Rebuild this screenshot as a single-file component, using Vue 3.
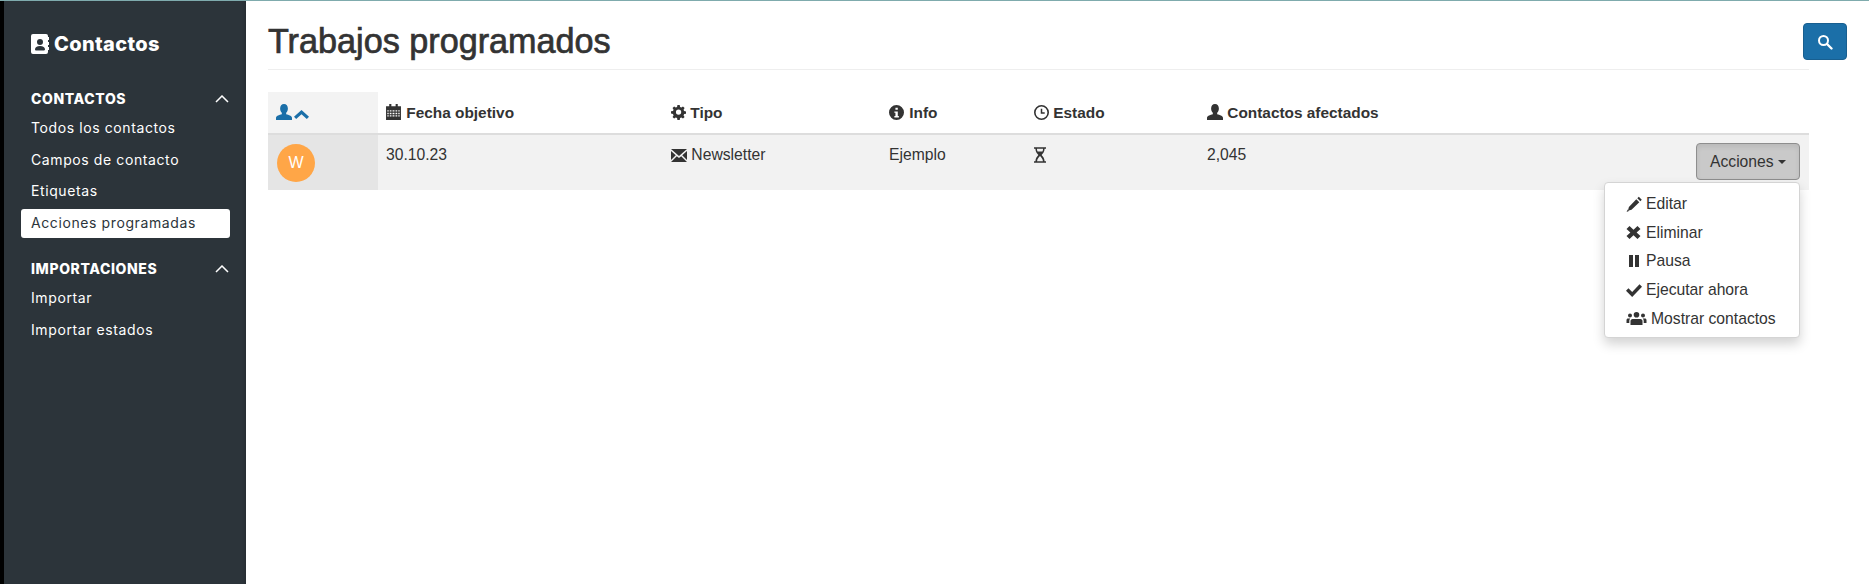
<script setup>
const contactos = ['Todos los contactos', 'Campos de contacto', 'Etiquetas']
const importaciones = ['Importar', 'Importar estados']
</script>

<template>
  <div class="page">
    <aside class="side">
      <div class="brand">
        <svg class="brand-ic" viewBox="0 0 18 20" width="18" height="20">
          <path fill="#fff" fill-rule="evenodd" d="M2 0h13a2 2 0 0 1 2 2v1h1v3h-1v2h1v3h-1v2h1v3h-1v2a2 2 0 0 1-2 2H2a2 2 0 0 1-2-2V2a2 2 0 0 1 2-2zm7 5a3 3 0 1 0 0 6 3 3 0 0 0 0-6zM4 15.500c0 .5.400.900.900.900h8.200c.5 0 .900-.400.900-.900 0-2-1.800-3.500-5-3.500s-5 1.500-5 3.500z"/>
        </svg>
        <span>Contactos</span>
      </div>

      <div class="group first">
        <span>CONTACTOS</span>
        <svg viewBox="0 0 14 8" width="14" height="8"><path d="M1 7l6-6 6 6" fill="none" stroke="#fff" stroke-width="1.500"/></svg>
      </div>
      <a v-for="c in contactos" :key="c" class="nav">{{ c }}</a>
      <a class="nav active">Acciones programadas</a>

      <div class="group second">
        <span>IMPORTACIONES</span>
        <svg viewBox="0 0 14 8" width="14" height="8"><path d="M1 7l6-6 6 6" fill="none" stroke="#fff" stroke-width="1.500"/></svg>
      </div>
      <a v-for="c in importaciones" :key="c" class="nav">{{ c }}</a>
    </aside>

    <main class="main">
      <div class="content">
        <h1 class="title">Trabajos programados</h1>
        <table class="tbl">
          <colgroup>
            <col class="c1" /><col class="c2" /><col class="c3" />
            <col class="c4" /><col class="c5" /><col class="c6" /><col />
          </colgroup>
          <thead>
            <tr>
              <th class="sorted">
                <svg viewBox="1 1 14 14" width="16" height="16"><path fill="#1b6fa8" d="M8 1c2.200 0 3.400 1.700 3.400 3.900 0 1.500-.600 2.900-1.500 3.700v1.300c2.200.6 5.100 1.500 5.100 3.100V15H1v-2c0-1.600 2.900-2.500 5.100-3.100V8.600C5.200 7.800 4.600 6.400 4.600 4.900 4.600 2.700 5.800 1 8 1z"/></svg>
                <svg class="chev" viewBox="0 0 15 10" width="15" height="10"><path fill="#1b6fa8" d="M7.500 0L15 6.800 12.800 9 7.500 4.200 2.200 9 0 6.800z"/></svg>
              </th>
              <th>
                <svg class="gap" viewBox="0 0 14 15" width="15" height="16"><path fill="#333" fill-rule="evenodd" d="M3 0h2v2h4V0h2v2h3v13H0V2h3zM1.200 5.800h1.300v1.300H1.200zm2.300 0h1.600v1.300H3.500zm2.600 0h1.800v1.300H6.100zm2.800 0h1.600v1.300H8.900zm2.600 0h1.300v1.300h-1.300zM1.200 8.100h1.300v1.400H1.200zm2.300 0h1.600v1.400H3.500zm2.600 0h1.800v1.400H6.100zm2.800 0h1.600v1.400H8.900zm2.600 0h1.300v1.400h-1.300zM1.200 10.500h1.300v1.300H1.200zm2.300 0h1.600v1.300H3.500zm2.600 0h1.800v1.300H6.100zm2.800 0h1.600v1.300H8.900zm2.600 0h1.300v1.300h-1.300z"/></svg>
                Fecha objetivo
              </th>
              <th>
                <svg viewBox="0 0 14 14" width="15" height="15"><path fill="#333" fill-rule="evenodd" d="M5.800 0h2.400l.4 2 1.400.6L11.700 1.500l1.700 1.700-1.100 1.700.6 1.400 2.100.4v2.400l-2.100.4-.6 1.400 1.100 1.700-1.700 1.700-1.700-1.100-1.400.6-.4 2.100H5.800l-.4-2.100-1.400-.6-1.700 1.100L.6 12.600l1.100-1.700-.6-1.400L-1 9V6.600l2.100-.4.6-1.400L.6 3.200l1.700-1.700L4 2.600 5.400 2zM7 4.600a2.800 2.800 0 1 0 0 5.600 2.800 2.800 0 0 0 0-5.600z" transform="translate(.9 .1) scale(.88)"/></svg>
                Tipo
              </th>
              <th>
                <svg class="gap" viewBox="0 0 14 14" width="15" height="15"><path fill="#333" fill-rule="evenodd" d="M7 0a7 7 0 1 1 0 14A7 7 0 0 1 7 0zM6 2.500v2h2.200v-2zM5 6v1.300h1v3H5v1.300h4.200v-1.300h-1V6z"/></svg>
                Info
              </th>
              <th>
                <svg viewBox="0 0 14 14" width="15" height="15"><path fill="#333" fill-rule="evenodd" d="M7 0a7 7 0 1 1 0 14A7 7 0 0 1 7 0zm0 1.500a5.500 5.500 0 1 0 0 11 5.500 5.500 0 0 0 0-11zM6.300 3.500h1.400v3.300H10v1.400H6.300z"/></svg>
                Estado
              </th>
              <th>
                <svg viewBox="1 1 14 14" width="16" height="16"><path fill="#333" d="M8 1c2.200 0 3.400 1.700 3.400 3.900 0 1.500-.600 2.900-1.500 3.700v1.300c2.200.6 5.100 1.500 5.100 3.100V15H1v-2c0-1.600 2.900-2.500 5.100-3.100V8.600C5.200 7.800 4.600 6.400 4.600 4.900 4.600 2.700 5.800 1 8 1z"/></svg>
                Contactos afectados
              </th>
              <th></th>
            </tr>
          </thead>
          <tbody>
            <tr>
              <td class="avatar-cell"><div class="avatar">W</div></td>
              <td>30.10.23</td>
              <td>
                <svg viewBox="0 0 16 13" width="16" height="13"><path fill="#333" d="M0 0h16L8 7zM0 2l4.800 4.200L0 11zM16 2v9l-4.800-4.800zM5.800 7.200L8 9.100l2.200-1.900L16 13H0z"/></svg>
                Newsletter
              </td>
              <td>Ejemplo</td>
              <td>
                <svg class="sand" viewBox="0 0 11 14" width="12" height="16"><path fill="#333" fill-rule="evenodd" d="M0 0h11v1.300H9.700c0 2.700-1.500 4.400-2.700 5.700 1.200 1.300 2.700 3 2.700 5.700H11V14H0v-1.300h1.300C1.300 10 2.800 8.300 4 7 2.800 5.700 1.300 4 1.300 1.300H0zM2.700 1.300c0 1 .200 1.800.600 2.500h4.400c.4-.7.600-1.500.600-2.500zM5.500 7.900C4.400 9.100 3 10.500 2.800 12.700h5.400C8 10.500 6.600 9.100 5.500 7.900z"/></svg>
              </td>
              <td>2,045</td>
              <td class="act-cell">
                <div class="act-wrap">
                  <button class="act-btn">Acciones <i class="caret"></i></button>
                  <ul class="menu">
                    <li>
                      <svg viewBox="0 0 16 17" width="16" height="17"><path fill="#333" d="M12.800 0.800L15.800 3.800 14.300 5.300 11.300 2.300zM10.300 3.200L13.300 6.200 5.500 13.800 1.900 14.800 2.900 11zM1.700 13.600l1.200 1.300-2.300 1.200z"/></svg>
                      <span>Editar</span>
                    </li>
                    <li>
                      <svg viewBox="0 0 16 13" width="16" height="13"><path fill="#333" d="M3.500 0l4 3.800L11.500 0l3 3-3.900 3.500 3.900 3.500-3 3-4-3.800-4 3.800-3-3 3.900-3.500L.5 3z"/></svg>
                      <span>Eliminar</span>
                    </li>
                    <li>
                      <svg viewBox="0 0 16 12" width="16" height="12"><path fill="#333" d="M3 0h4v12H3zM9 0h4v12H9z"/></svg>
                      <span>Pausa</span>
                    </li>
                    <li>
                      <svg viewBox="0 0 15 12" width="16" height="13"><path fill="#333" d="M12.700.2L15 2.500 5.800 12 0 6.300l2.300-2.300 3.500 3.400z"/></svg>
                      <span>Ejecutar ahora</span>
                    </li>
                    <li>
                      <svg viewBox="0 0 20 13" width="21" height="13"><path fill="#333" d="M10 0a2.800 2.800 0 1 1 0 5.600A2.800 2.800 0 0 1 10 0zM3.500 1.500a2 2 0 1 1 0 4 2 2 0 0 1 0-4zm13 0a2 2 0 1 1 0 4 2 2 0 0 1 0-4zM6 7h8c1.200 0 2 1 2 2.200V13H4V9.200C4 8 4.800 7 6 7zM1.500 6.500h2.300c-.6.500-1 1.300-1 2.300v2.200H0V8c0-.8.700-1.500 1.500-1.500zm14.700 0h2.300c.8 0 1.500.7 1.500 1.500v3h-2.800V8.800c0-1-.4-1.800-1-2.300z"/></svg>
                      <span>Mostrar contactos</span>
                    </li>
                  </ul>
                </div>
              </td>
            </tr>
          </tbody>
        </table>
      </div>
      <button class="search">
        <svg viewBox="0 0 16 16" width="16" height="16"><circle cx="6.500" cy="6.500" r="4.500" fill="none" stroke="#fff" stroke-width="2"/><path d="M10 10l4.500 4.500" stroke="#fff" stroke-width="2.400" stroke-linecap="round"/></svg>
      </button>
    </main>
  </div>
</template>

<style>
html, body { margin: 0; background: #fff; }
</style>

<style scoped>
.page {
  display: flex;
  height: 584px;
  overflow: hidden;
  border-top: 1px solid #7fabad;
  box-sizing: border-box;
  font-family: "Liberation Sans", Arial, sans-serif;
  font-size: 15.700px;
  color: #333;
}
.side {
  width: 246px;
  flex: none;
  box-sizing: border-box;
  background: #2c343a;
  border-left: 4px solid #000;
  box-shadow: inset -3px 0 3px -2px rgba(0, 0, 0, .18);
  padding: 31px 16px 0 17px;
  font-family: Inter, "Open Sans", sans-serif;
  color: #fff;
}
.brand {
  display: flex;
  align-items: center;
  gap: 5px;
  padding-left: 10px;
  font-size: 20px;
  font-weight: 800;
  letter-spacing: .35px;
  line-height: 24px;
}
.group {
  display: flex;
  justify-content: space-between;
  align-items: center;
  padding: 0 1px 0 10px;
  font-size: 14px;
  font-weight: 800;
  letter-spacing: .6px;
  line-height: 20px;
}
.group.first { margin-top: 33px; }
.group.second { margin-top: 24px; }
.nav {
  display: block;
  height: 29px;
  margin: 5px 0 -2.400px;
  padding-left: 10px;
  line-height: 27px;
  font-size: 14px;
  letter-spacing: .6px;
  border-radius: 3px;
}
.nav.active {
  background: #fff;
  color: #2c343a;
}
.main {
  flex: 1;
  display: flex;
  padding: 0 22px;
  min-width: 0;
}
.content {
  flex: 1;
  min-width: 0;
}
.title {
  margin: 0 0 22px;
  border-bottom: 1px solid #eee;
  font-size: 34.200px;
  font-weight: 400;
  -webkit-text-stroke: .7px #333;
  line-height: 80px;
  height: 68px;
  color: #333;
}
.tbl {
  width: 100%;
  table-layout: fixed;
  border-collapse: collapse;
}
.c1 { width: 110px; }
.c2 { width: 285px; }
.c3 { width: 218px; }
.c4 { width: 145px; }
.c5 { width: 173px; }
.c6 { width: 300px; }
.tbl th {
  height: 42px;
  box-sizing: border-box;
  padding: 8px;
  text-align: left;
  font-size: 15.400px;
  font-weight: 700;
  border-bottom: 2px solid #ddd;
  color: #333;
  vertical-align: middle;
}
.tbl th.sorted {
  background: #f3f3f3;
}
.tbl td {
  height: 56px;
  box-sizing: border-box;
  padding: 8px;
  background: #f2f2f2;
  vertical-align: top;
  line-height: 24px;
}
.tbl svg { vertical-align: -2px; }
.tbl svg.gap { margin-right: 1px; }
.tbl svg.chev { margin-left: 2px; }
.tbl svg.sand { vertical-align: -3px; }
.tbl td.avatar-cell { background: #e5e5e5; }
.avatar {
  width: 38px;
  height: 38px;
  margin: 1px 0 0 1px;
  border-radius: 50%;
  background: #ffa647;
  color: #fff;
  font-size: 16px;
  line-height: 38px;
  text-align: center;
}
.act-cell { text-align: right; }
.act-wrap {
  position: relative;
  display: inline-block;
  margin-right: 1px;
  vertical-align: top;
  height: 37px;
}
.act-btn {
  display: block;
  width: 104px;
  height: 37px;
  box-sizing: border-box;
  background: #c9c9c9;
  border: 1px solid #8e8e8e;
  border-radius: 4px;
  font: 15.700px "Liberation Sans", Arial, sans-serif;
  color: #333;
  padding: 0;
  box-shadow: inset 0 3px 5px rgba(0, 0, 0, .08);
}
.caret {
  display: inline-block;
  width: 0;
  height: 0;
  vertical-align: middle;
  border-top: 4px solid #333;
  border-left: 4px solid transparent;
  border-right: 4px solid transparent;
}
.menu {
  position: absolute;
  top: 39px;
  right: 0;
  width: 196px;
  height: 156px;
  box-sizing: border-box;
  margin: 0;
  padding: 7px 0 3px;
  list-style: none;
  background: #fff;
  border: 1px solid #d4d4d4;
  border-radius: 4px;
  box-shadow: 0 6px 12px rgba(0, 0, 0, .175);
  text-align: left;
  z-index: 2;
}
.menu li {
  display: flex;
  align-items: center;
  gap: 4px;
  height: 28.600px;
  padding-left: 21px;
  white-space: nowrap;
}
.menu li svg { flex: none; vertical-align: baseline; }
.search {
  flex: none;
  width: 44px;
  height: 37px;
  margin: 22px 0 0 -6px;
  padding: 0;
  background: #1b6fa8;
  border: 1px solid #185f90;
  border-radius: 4px;
}
.search svg { display: block; margin: 0 auto; }
</style>
